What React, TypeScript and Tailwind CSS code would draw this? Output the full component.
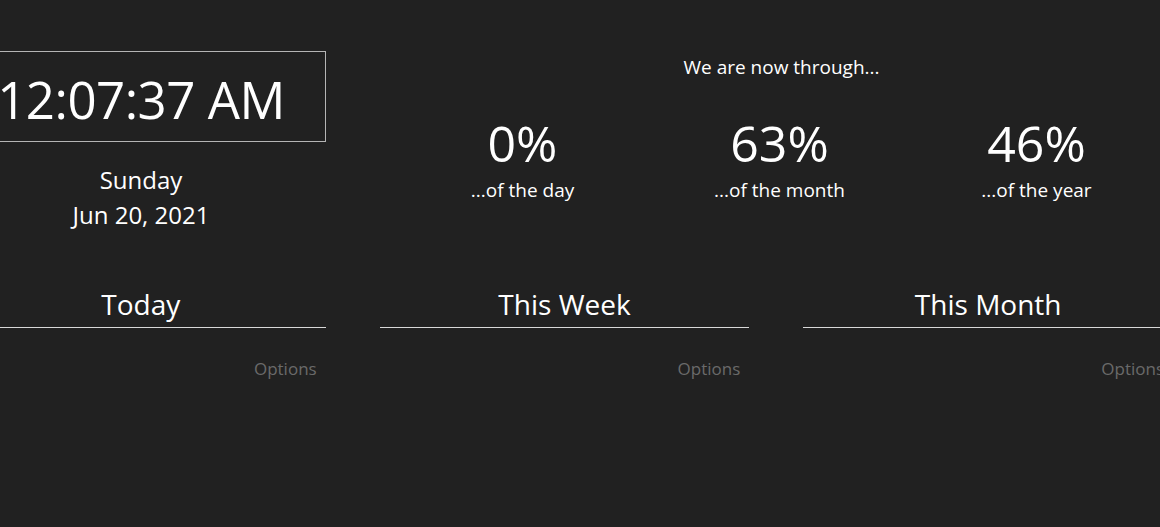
export default function App() {
  const stats = [
    { value: "0%", label: "...of the day" },
    { value: "63%", label: "...of the month" },
    { value: "46%", label: "...of the year" },
  ];

  const lists = ["Today", "This Week", "This Month"];

  return (
    <div
      className="w-[1160px] h-[527px] overflow-hidden bg-[#212121] text-white"
      style={{ fontFamily: '"Open Sans", "Noto Sans", sans-serif' }}
    >
      <div className="ml-[-44px] w-[1217px]">
        {/* Top row */}
        <div className="flex gap-[54px] pt-[51px]">
          <div className="w-[370px] flex flex-col items-center">
            <div className="w-full h-[91px] border border-[#b5b5b5] flex items-center justify-center pt-[5px]">
              <span className="text-[51px] leading-none tracking-[-0.5px]">12:07:37 AM</span>
            </div>
            <div className="mt-[20px] text-[24px] leading-[35px] text-center">
              <div>Sunday</div>
              <div>Jun 20, 2021</div>
            </div>
          </div>

          <div className="flex-1 flex flex-col items-center pl-[14px] pr-[8px]">
            <div className="mt-[3px] text-[19px] leading-[26px] pl-[4px]">We are now through...</div>
            <div className="mt-[33px] w-full grid grid-cols-3">
              {stats.map((s) => (
                <div key={s.label} className="flex flex-col items-center">
                  <div className="text-[50px] leading-[60px]">{s.value}</div>
                  <div className="mt-[4px] text-[19px] leading-[26px]">{s.label}</div>
                </div>
              ))}
            </div>
          </div>
        </div>

        {/* Lists */}
        <div className="flex gap-[54px] mt-[53px]">
          {lists.map((t) => (
            <div key={t} className="w-[370px]">
              <div className="text-[28px] leading-[38px] text-center border-b border-[#d8d8d8] pb-[4px]">{t}</div>
              <div className="flex justify-end pr-[9px] mt-[28px]">
                <span className="text-[17px] text-[#6a6a6a]">Options</span>
              </div>
            </div>
          ))}
        </div>
      </div>
    </div>
  );
}
